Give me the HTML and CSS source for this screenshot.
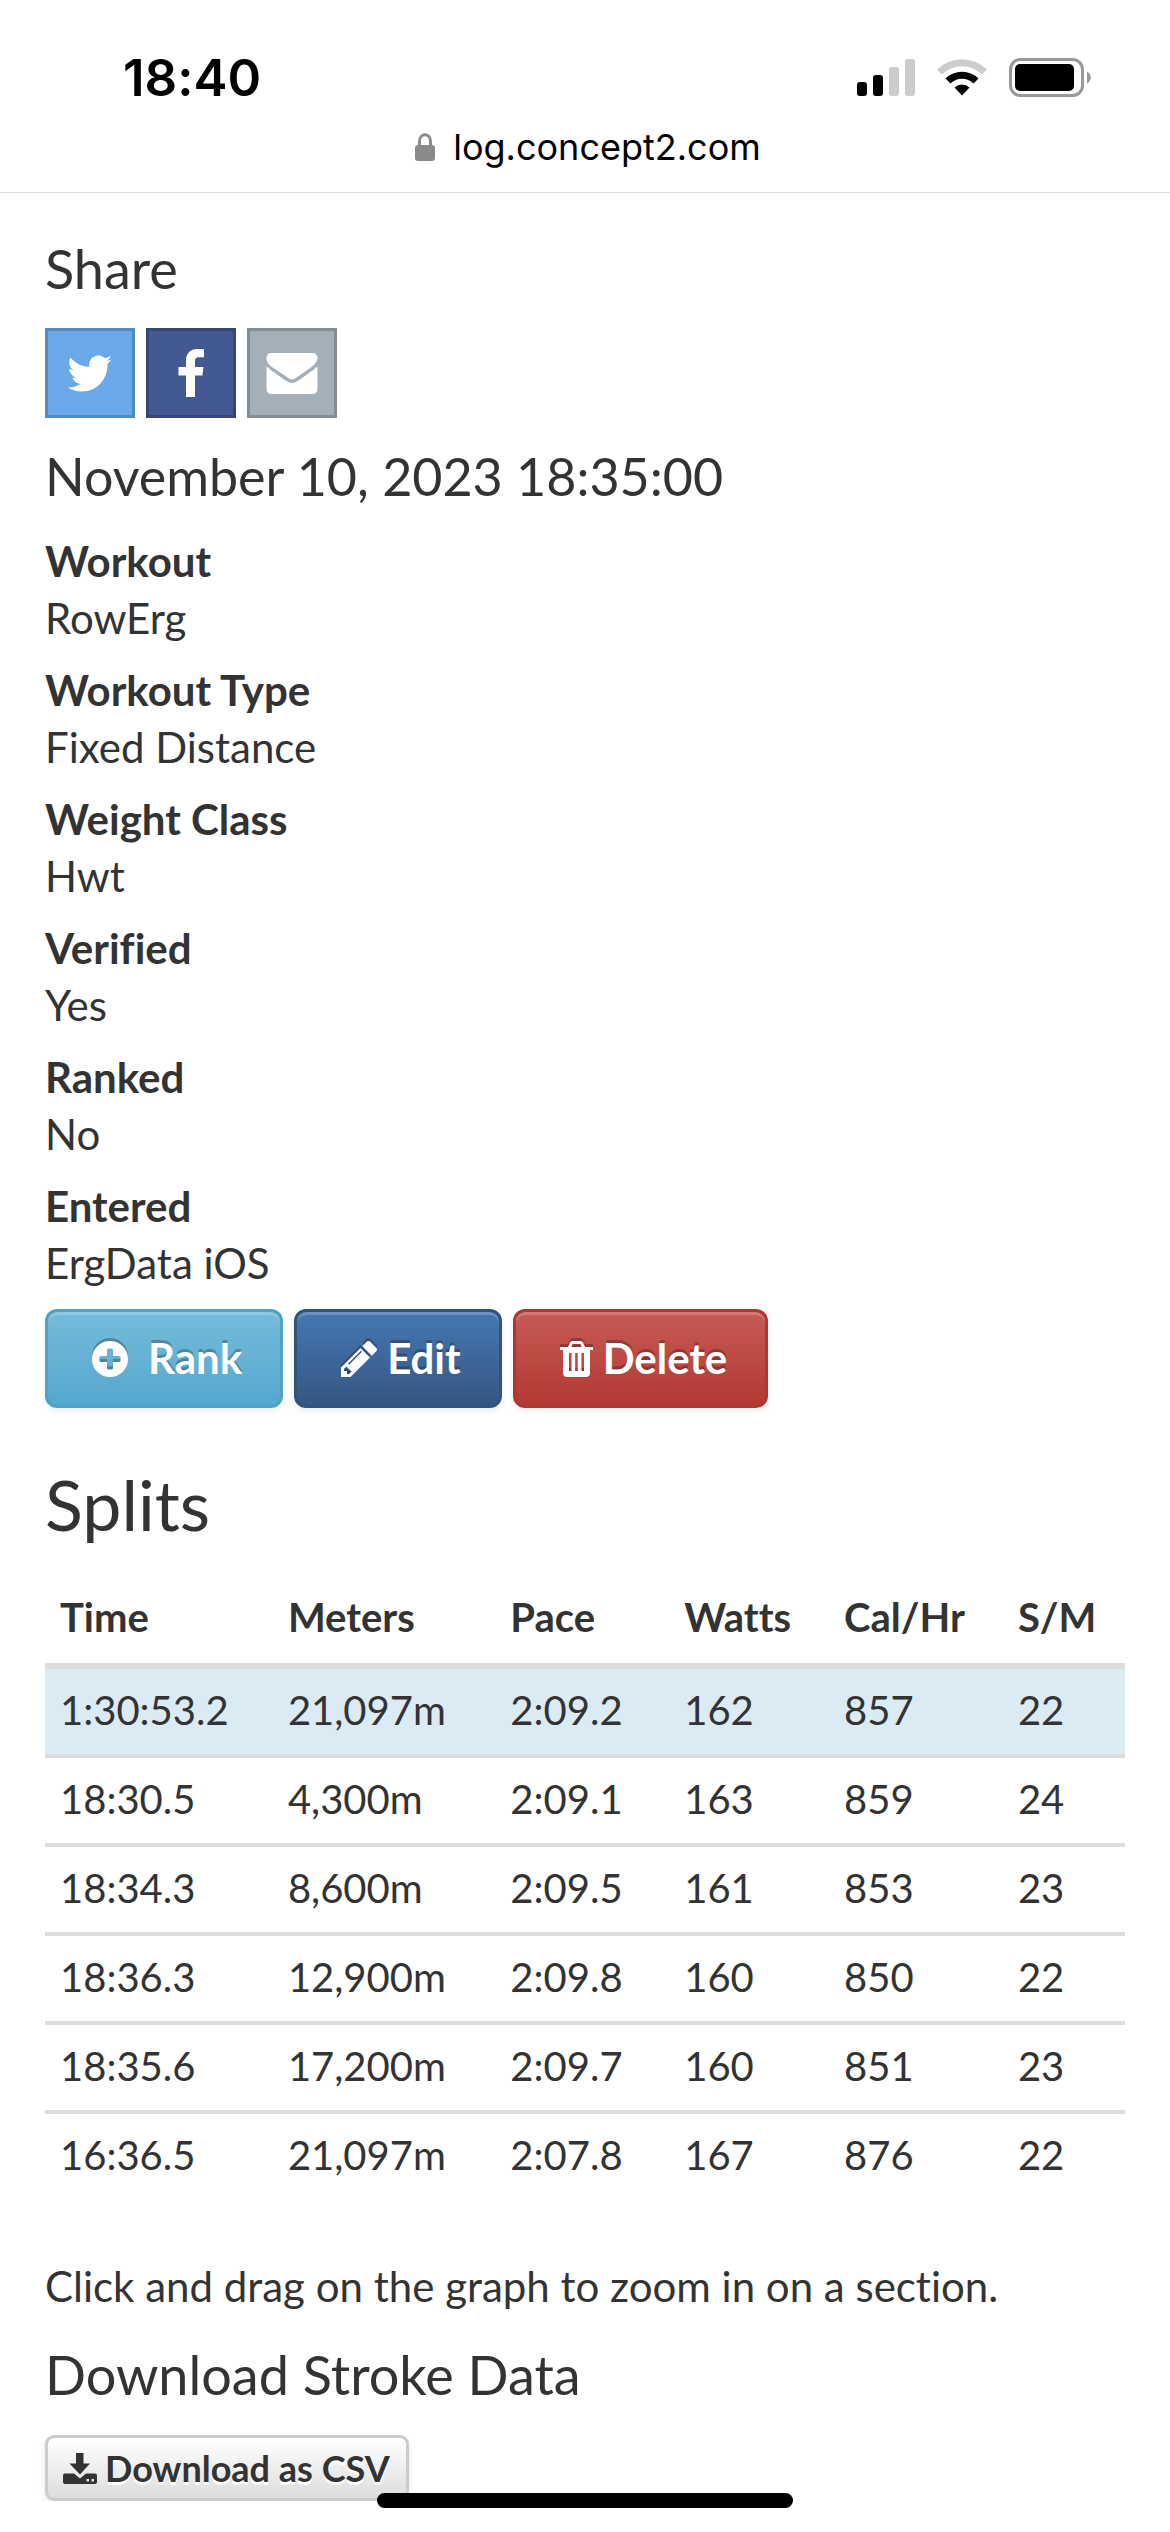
FILE: index.html
```
<!DOCTYPE html>
<html lang="en">
<head>
  <meta charset="UTF-8">
  <meta name="viewport" content="width=device-width, initial-scale=1.0">
  <title>Concept2 Logbook</title>
  <link rel="stylesheet" href="styles.css">
</head>
<body>
  <header class="browser-bar">
    <div class="status">
      <span class="time">18:40</span>
      <div class="status-icons">
        <svg width="58" height="39" viewBox="0 0 58 39">
          <rect x="0" y="24" width="10" height="14" rx="3"/>
          <rect x="16" y="17" width="10" height="21" rx="3"/>
          <rect x="32" y="9" width="10" height="29" rx="3" fill="#ccc"/>
          <rect x="48" y="1" width="10" height="37" rx="3" fill="#ccc"/>
        </svg>
        <svg width="50" height="39" viewBox="0 0 50 39">
          <path d="M0 11.500A35.500 35.500 0 0 1 50 11.500L45 16.500A28.500 28.500 0 0 0 5 16.500Z" fill="#ccc"/>
          <path d="M8.500 20.500A23.500 23.500 0 0 1 41.500 20.500L36.500 25.500A16.500 16.500 0 0 0 13.500 25.500Z"/>
          <path d="M17.500 29.500A11 11 0 0 1 32.500 29.500L25 37.500Z"/>
        </svg>
        <svg width="82" height="39" viewBox="0 0 82 39">
          <rect x="1.500" y="1.500" width="72" height="36" rx="10" fill="none" stroke="#999" stroke-width="3"/>
          <rect x="6" y="6" width="59" height="27" rx="5"/>
          <path d="M78 13.500C83 16 83 23 78 25.500Z" fill="#999"/>
        </svg>
      </div>
    </div>
    <div class="address">
      <svg width="20" height="28" viewBox="0 0 20 28">
        <path d="M4.500 14V8.500C4.500 -0.500 15.500 -0.500 15.500 8.500V14" fill="none" stroke="#8a8a8c" stroke-width="3"/>
        <rect x="0" y="12" width="20" height="16" rx="3" fill="#8a8a8c"/>
      </svg>
      <span>log.concept2.com</span>
    </div>
  </header>

  <main class="container">
    <h4 class="heading">Share</h4>
    <div class="share">
      <a href="#" class="share-btn twitter" aria-label="Twitter">
        <svg width="44" height="37" viewBox="0 0 44 37" fill="#fff">
          <path d="M43.500 4.500L39.500 9V10.500C39.500 23 30 36.500 14 36.500C9 36.500 4 35.200 0 32.500C4.500 33 9 31.500 12.800 28.800C9 28.700 5.700 26.200 4.500 22.700C5.900 22.900 7.100 22.900 8.300 22.500C4.300 21.500 1.300 18 1.300 13.800C2.500 14.500 3.900 14.900 5.200 14.900C1.300 12.200 0 7 2.500 2.500C7 8 13.500 11.600 21.400 12C20 5.500 24.500 0.500 30.300 0.500C33 0.500 35.300 1.600 37 3.300C39 2.900 41 2.100 42.700 1.100C42.100 3.100 40.700 4.700 39 5.700C40.600 5.500 42.100 5.100 43.500 4.500Z"/>
        </svg>
      </a>
      <a href="#" class="share-btn facebook" aria-label="Facebook">
        <svg width="26" height="48" viewBox="0 0 26 48" fill="#fff">
          <path d="M26 .4V8.200H21.300C17.700 8.200 17 9.900 17 12.500V18H25.500L24.400 26.500H17V48H8V26.500H.5V18H8V11.700C8 4.300 12.600 0 19.300 0C22.500 0 25.200 .2 26 .4Z"/>
        </svg>
      </a>
      <a href="#" class="share-btn email" aria-label="Email">
        <svg width="52" height="41" viewBox="0 0 52 41" fill="#fff">
          <path d="M5 0H47A4.600 4.600 0 0 1 51.500 4.600C51.500 8.500 48.500 12 45.500 14L30.500 24.500C29 25.500 27.500 26.500 26 26.500C24.500 26.500 23 25.500 21.500 24.500L6 14C3 12 .5 8.500 .5 5.500C.5 2 2 0 5 0Z"/>
          <path d="M.5 13.500C8 19.500 14 23.500 19.500 27.500C21.500 29 24 30 26 30C28 30 30.500 29 32.500 27.500C38 23.500 44 19.500 51.500 13.500V36A4.600 4.600 0 0 1 47 41H5A4.600 4.600 0 0 1 .5 36Z"/>
        </svg>
      </a>
    </div>

    <h4 class="heading date">November 10, 2023 18:35:00</h4>
    <dl class="details">
      <div><dt>Workout</dt><dd>RowErg</dd></div>
      <div><dt>Workout Type</dt><dd>Fixed Distance</dd></div>
      <div><dt>Weight Class</dt><dd>Hwt</dd></div>
      <div><dt>Verified</dt><dd>Yes</dd></div>
      <div><dt>Ranked</dt><dd>No</dd></div>
      <div><dt>Entered</dt><dd>ErgData iOS</dd></div>
    </dl>

    <div class="actions">
      <button type="button" class="btn btn-rank">
        <svg width="36" height="36" viewBox="0 0 36 36" fill="#fff" fill-rule="evenodd">
          <path d="M18 0A18 18 0 1 1 18 36A18 18 0 1 1 18 0ZM16.500 7.500Q15 7.500 15 9V15H9Q7.500 15 7.500 16.500V19.500Q7.500 21 9 21H15V27Q15 28.500 16.500 28.500H19.500Q21 28.500 21 27V21H27Q28.500 21 28.500 19.500V16.500Q28.500 15 27 15H21V9Q21 7.500 19.500 7.500Z"/>
        </svg>
        Rank
      </button>
      <button type="button" class="btn btn-edit">
        <svg width="36" height="36" viewBox="0 0 36 36" fill="#fff" fill-rule="evenodd">
          <path d="M0 26.500L19.500 7L29 16.500L9.500 36H0ZM3 28V30H6V33H8L10.500 30.500L5.500 25.500ZM20 9.800L7 22.800L8 23.800L21 10.800Z"/>
          <path d="M21.300 5.200L25.700 .8Q27.500 -.8 29.300 .8L35.200 6.700Q36.800 8.500 35.200 10.300L30.800 14.700Z"/>
        </svg>
        Edit
      </button>
      <button type="button" class="btn btn-delete">
        <svg width="33" height="36" viewBox="0 0 33 36" fill="#fff" fill-rule="evenodd">
          <path d="M0 6H8L10 1.500Q11 0 12.500 0H20.500Q22 0 23 1.500L25 6H33V9H30V31.500Q30 36 26 36H7Q3 36 3 31.500V9H0ZM11.300 6H21.700L20.500 3H12.500ZM9 12V30H11.500V12ZM15.200 12V30H17.700V12ZM21.500 12V30H24V12Z"/>
        </svg>
        Delete
      </button>
    </div>

    <h3 class="splits-title">Splits</h3>
    <table class="splits">
      <thead>
        <tr><th>Time</th><th>Meters</th><th>Pace</th><th>Watts</th><th>Cal/Hr</th><th>S/M</th></tr>
      </thead>
      <tbody>
        <tr class="total"><td>1:30:53.2</td><td>21,097m</td><td>2:09.2</td><td>162</td><td>857</td><td>22</td></tr>
        <tr><td>18:30.5</td><td>4,300m</td><td>2:09.1</td><td>163</td><td>859</td><td>24</td></tr>
        <tr><td>18:34.3</td><td>8,600m</td><td>2:09.5</td><td>161</td><td>853</td><td>23</td></tr>
        <tr><td>18:36.3</td><td>12,900m</td><td>2:09.8</td><td>160</td><td>850</td><td>22</td></tr>
        <tr><td>18:35.6</td><td>17,200m</td><td>2:09.7</td><td>160</td><td>851</td><td>23</td></tr>
        <tr><td>16:36.5</td><td>21,097m</td><td>2:07.8</td><td>167</td><td>876</td><td>22</td></tr>
      </tbody>
    </table>

    <p class="hint">Click and drag on the graph to zoom in on a section.</p>
    <h4 class="heading">Download Stroke Data</h4>
    <button type="button" class="btn-csv">
      <svg width="34" height="31" viewBox="0 0 34 31" fill="#333" fill-rule="evenodd">
        <path d="M13 0H20.500V10.500H27L17 21.500L6.500 10.500H13Z"/>
        <path d="M2 20.500H11L17 25.500L23 20.500H32Q34 20.500 34 22.500V29Q34 31 32 31H2Q0 31 0 29V22.500Q0 20.500 2 20.500ZM23.500 26V28.500H26V26ZM28.500 26V28.500H31V26Z"/>
      </svg>
      Download as CSV
    </button>
  </main>

  <div class="home-bar"></div>
</body>
</html>
```
FILE: styles.css
```
* {
  box-sizing: border-box;
}

body {
  margin: 0;
  background-color: #fff;
  color: #333;
  font-family: Lato, sans-serif;
  font-size: 42px;
  font-variant-ligatures: none;
  line-height: 57px;
}

svg {
  display: block;
  flex: none;
}

/* Phone status and address */
.browser-bar {
  padding: 48px 79px 23px 123px;
  border-bottom: 1px solid #ddd;
  background-color: #fff;
  color: #000;
  font-family: Inter, sans-serif;
}

.status {
  display: flex;
  justify-content: space-between;
  line-height: 60px;
}

.time {
  font-size: 51px;
  font-weight: 600;
}

.status-icons {
  display: flex;
  gap: 22px;
  padding-top: 10px;
}

.address {
  display: flex;
  align-items: center;
  justify-content: center;
  gap: 18px;
  margin: 17px 0 0 -38px;
  font-size: 36px;
  line-height: 44px;
}

.container {
  padding: 46px 45px 0;
}

.heading {
  margin: 0;
  font-size: 54px;
  font-weight: 400;
  line-height: 60px;
}

.date {
  font-size: 52px;
}

/* Share links */
.share {
  display: flex;
  gap: 11px;
  margin: 29px 0 28px;
}

.share-btn {
  display: flex;
  align-items: center;
  justify-content: center;
  width: 90px;
  height: 90px;
  border: 3px solid;
}

.twitter {
  background-color: #6aa9e9;
  border-color: #5588bb;
}

.facebook {
  background-color: #435992;
  border-color: #364775;
}

.email {
  background-color: #a3b0ba;
  border-color: #828d95;
}

.details {
  display: grid;
  gap: 15px;
  margin: 27px 0 17px;
}

dt {
  font-weight: 700;
}

dd {
  margin: 0;
}

/* Buttons */
.actions {
  display: flex;
  gap: 11px;
}

.btn {
  display: flex;
  align-items: center;
  gap: 10px;
  height: 99px;
  padding: 0 38px 0 44px;
  border: 3px solid;
  border-radius: 12px;
  color: #fff;
  font: 700 42px/57px Lato, sans-serif;
  text-shadow: 0 -3px 0 rgba(0, 0, 0, 0.25);
  box-shadow: inset 0 3px 0 rgba(255, 255, 255, 0.2), 0 3px 6px rgba(0, 0, 0, 0.08);
}

.btn svg {
  filter: drop-shadow(0 -3px 0 rgba(0, 0, 0, 0.25));
}

.btn-rank {
  gap: 20px;
  background: linear-gradient(#74bcd9, #55a7cf);
  border-color: #4fa2c6;
}

.btn-edit {
  background: linear-gradient(#4577b3, #345782);
  border-color: #31547f;
}

.btn-delete {
  background: linear-gradient(#c75a54, #b13931);
  border-color: #ab3832;
}

.splits-title {
  margin: 56px 0 30px;
  font-size: 70px;
  font-weight: 400;
  line-height: 80px;
}

/* Splits table */
.splits {
  width: 100%;
  table-layout: fixed;
  border-spacing: 0;
  font-size: 40px;
}

.splits th {
  padding: 15px 15px 17px;
  border-bottom: 6px solid #ddd;
  text-align: left;
}

.splits th:nth-child(1) { width: 21.1%; }
.splits th:nth-child(2) { width: 20.6%; }
.splits th:nth-child(3) { width: 16.1%; }
.splits th:nth-child(4) { width: 14.8%; }
.splits th:nth-child(5) { width: 16.1%; }

.splits td {
  padding: 13px 15px 15px;
  border-top: 4px solid #ddd;
}

.splits .total td {
  border-top: 0;
  background-color: #dbebf4;
}

.hint {
  margin: 59px 0 30px;
}

.btn-csv {
  display: flex;
  align-items: center;
  gap: 8px;
  height: 66px;
  margin-top: 30px;
  padding: 0 16px 0 15px;
  border: 3px solid #ccc;
  border-radius: 9px;
  background: linear-gradient(#fff, #ddd);
  color: #333;
  font: 700 36px/42px Lato, sans-serif;
  text-shadow: 0 3px 0 #fff;
  box-shadow: 0 3px 6px rgba(0, 0, 0, 0.1);
}

.home-bar {
  position: fixed;
  bottom: 24px;
  left: 50%;
  width: 416px;
  height: 15px;
  margin-left: -208px;
  border-radius: 8px;
  background-color: #000;
}
```
